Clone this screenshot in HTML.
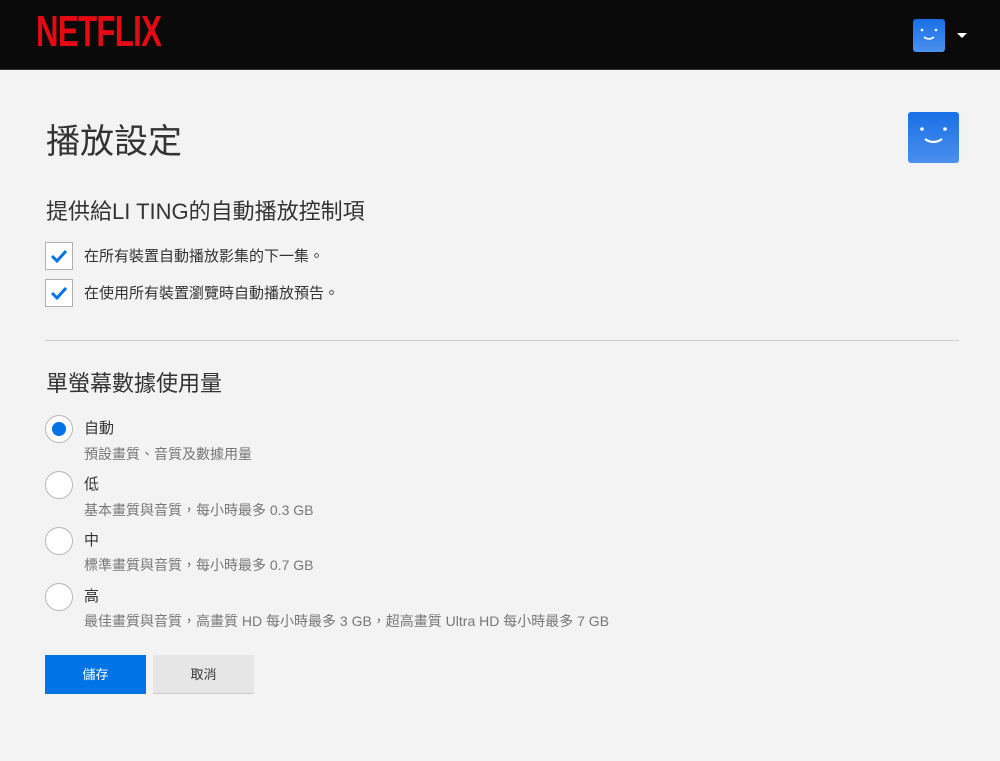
<!DOCTYPE html>
<html><head><meta charset="utf-8"><style>
*{margin:0;padding:0;box-sizing:border-box}
body{width:1000px;height:761px;background:#f3f3f3;font-family:"Liberation Sans","Noto Sans CJK TC",sans-serif;color:#333;position:relative;overflow:hidden}
.hdr{position:absolute;left:0;top:0;width:1000px;height:70px;background:#0a0a0a;border-bottom:1px solid #333}
.logo{position:absolute;left:36px;top:8px;color:#e50914;font-family:"Liberation Sans",sans-serif;font-weight:bold;font-size:44px;letter-spacing:-1px;transform:scaleX(0.71);transform-origin:left;line-height:48px}
.av{position:absolute;background:linear-gradient(#1a6fe6,#4a90ee);border-radius:3px}
.a{position:absolute}
.cb{position:absolute;left:45px;width:28px;height:28px;border:1px solid #b0b0b0;background:#fff}
.rb{position:absolute;left:45px;width:28px;height:28px;border:1px solid #b5b5b5;border-radius:50%;background:#fff}
.t{position:absolute;left:84px;font-size:15px;color:#333}
.s{position:absolute;left:84px;font-size:14px;color:#777}
</style></head><body>
<div class="hdr"><div class="logo">NETFLIX</div>
<div class="av" style="left:913px;top:19px;width:32px;height:33px"><svg width="32" height="33"><circle cx="9" cy="11" r="1.3" fill="#fff"/><circle cx="23" cy="11" r="1.3" fill="#fff"/><path d="M11 18 Q16 22 21 18" stroke="#fff" stroke-width="1.5" fill="none"/></svg></div>
<div class="a" style="left:957px;top:33px;border-left:5px solid transparent;border-right:5px solid transparent;border-top:5px solid #fff"></div></div>
<div class="a" style="left:46px;top:114px;font-size:34px;color:#333">播放設定</div>
<div class="av" style="left:908px;top:112px;width:51px;height:51px"><svg width="51" height="51"><circle cx="14" cy="17" r="1.8" fill="#fff"/><circle cx="37" cy="17" r="1.8" fill="#fff"/><path d="M17 27 Q25.5 33 34 27" stroke="#fff" stroke-width="2.2" fill="none"/></svg></div>
<div class="a" style="left:46px;top:194px;font-size:22px;color:#333">提供給LI TING的自動播放控制項</div>
<div class="cb" style="top:242px"><svg width="26" height="26"><path d="M6 13 L11 18 L20 8" stroke="#0073e6" stroke-width="3" fill="none"/></svg></div>
<div class="t" style="top:245px">在所有裝置自動播放影集的下一集。</div>
<div class="cb" style="top:279px"><svg width="26" height="26"><path d="M6 13 L11 18 L20 8" stroke="#0073e6" stroke-width="3" fill="none"/></svg></div>
<div class="t" style="top:282px">在使用所有裝置瀏覽時自動播放預告。</div>
<div class="a" style="left:45px;top:340px;width:914px;height:1px;background:#ccc"></div>
<div class="a" style="left:46px;top:366px;font-size:22px;color:#333">單螢幕數據使用量</div>
<div class="rb" style="top:415px"><div class="a" style="left:6px;top:6px;width:14px;height:14px;border-radius:50%;background:#0073e6"></div></div>
<div class="t" style="top:417px">自動</div><div class="s" style="top:444px">預設畫質、音質及數據用量</div>
<div class="rb" style="top:471px"></div>
<div class="t" style="top:473px">低</div><div class="s" style="top:500px">基本畫質與音質，每小時最多 0.3 GB</div>
<div class="rb" style="top:527px"></div>
<div class="t" style="top:529px">中</div><div class="s" style="top:555px">標準畫質與音質，每小時最多 0.7 GB</div>
<div class="rb" style="top:583px"></div>
<div class="t" style="top:585px">高</div><div class="s" style="top:611px">最佳畫質與音質，高畫質 HD 每小時最多 3 GB，超高畫質 Ultra HD 每小時最多 7 GB</div>
<div class="a" style="left:45px;top:655px;width:101px;height:39px;background:#0073e6;color:#fff;font-size:13px;text-align:center;line-height:39px">儲存</div>
<div class="a" style="left:153px;top:655px;width:101px;height:39px;background:#e6e6e6;border-bottom:1px solid #ccc;color:#333;font-size:13px;text-align:center;line-height:39px">取消</div>
</body></html>
